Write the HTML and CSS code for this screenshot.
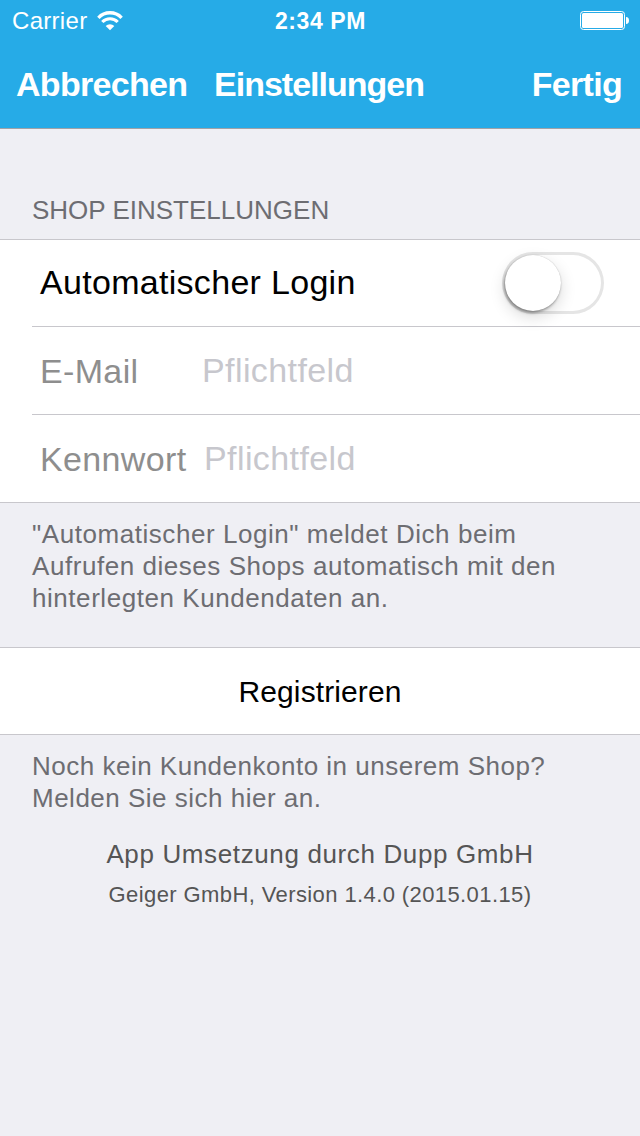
FILE: index.html
```html
<!DOCTYPE html>
<html lang="de">
<head>
    <meta charset="UTF-8">
    <meta name="viewport" content="width=device-width, initial-scale=1.0">
    <title>Einstellungen</title>
    <link rel="stylesheet" href="styles.css">
</head>
<body>
    <header class="header">
        <div class="status-bar">
            <div class="carrier">
                <span>Carrier</span>
                <svg class="wifi" width="26" height="20" viewBox="0 0 26 20">
                    <path d="M1.4 6.8 A16 16 0 0 1 24.6 6.8" fill="none" stroke="#fff" stroke-width="3.4"/>
                    <path d="M5.3 11 A10.7 10.7 0 0 1 20.7 11" fill="none" stroke="#fff" stroke-width="3.2"/>
                    <path d="M13 19.2 L8.7 14.9 A6.1 6.1 0 0 1 17.3 14.9 Z" fill="#fff"/>
                </svg>
            </div>
            <span class="time">2:34 PM</span>
            <svg class="battery" width="49" height="20" viewBox="0 0 49 20">
                <rect x="0.5" y="0.5" width="44" height="18" rx="3" fill="none" stroke="#fff"/>
                <rect x="2" y="2" width="41" height="15" rx="1.5" fill="#fff"/>
                <path d="M46 6 C48.2 6 49 7.4 49 9.5 C49 11.6 48.2 13 46 13 Z" fill="#fff"/>
            </svg>
        </div>
        <nav class="nav-bar">
            <button class="cancel">Abbrechen</button>
            <h1>Einstellungen</h1>
            <button class="done">Fertig</button>
        </nav>
    </header>

    <main>
        <h2>SHOP EINSTELLUNGEN</h2>
        <form class="group">
            <div class="row">
                <label class="login-label" for="autoLogin">Automatischer Login</label>
                <input class="switch" type="checkbox" id="autoLogin">
            </div>
            <div class="row">
                <label for="email">E-Mail</label>
                <input class="field" type="email" id="email" placeholder="Pflichtfeld">
            </div>
            <div class="row">
                <label for="password">Kennwort</label>
                <input class="field password" type="password" id="password" placeholder="Pflichtfeld">
            </div>
        </form>
        <p class="note login-note">"Automatischer Login" meldet Dich beim<br>Aufrufen dieses Shops automatisch mit den<br>hinterlegten Kundendaten an.</p>

        <button class="register">Registrieren</button>
        <p class="note">Noch kein Kundenkonto in unserem Shop?<br>Melden Sie sich hier an.</p>
    </main>

    <footer>
        <p class="credit">App Umsetzung durch Dupp GmbH</p>
        <p class="version">Geiger GmbH, Version 1.4.0 (2015.01.15)</p>
    </footer>
</body>
</html>
```
FILE: styles.css
```css
* {
    box-sizing: border-box;
    margin: 0;
    padding: 0;
    font-family: "Liberation Sans", Arial, sans-serif;
}

body {
    min-height: 100vh;
    background-color: #efeff4;
}

button {
    border: none;
    background: none;
    cursor: pointer;
}

.header {
    height: 129px;
    background-color: #26abe7;
    border-bottom: 1px solid #a0a2a7;
    color: #fff;
}

.status-bar {
    display: grid;
    grid-template-columns: 1fr auto 1fr;
    align-items: center;
    height: 41px;
    padding: 0 11px 0 12px;
    font-size: 24px;
}

.carrier {
    display: flex;
    align-items: center;
    gap: 10px;
    letter-spacing: 0.3px;
}

.time {
    padding-top: 1px;
    font-size: 23px;
    font-weight: bold;
    letter-spacing: 0.6px;
}

.battery {
    justify-self: end;
}

.nav-bar {
    display: grid;
    grid-template-columns: 1fr auto 1fr;
    align-items: center;
    height: 87px;
    padding: 0 18px 0 16px;
}

.nav-bar button, .nav-bar h1 {
    color: #fff;
    font-size: 34px;
    font-weight: bold;
    letter-spacing: -0.7px;
}

.nav-bar h1 {
    letter-spacing: -1px;
}

.cancel {
    justify-self: start;
}

.done {
    justify-self: end;
}

h2 {
    height: 110px;
    padding: 66px 32px 0;
    color: #6d6d72;
    font-size: 26px;
    font-weight: normal;
    line-height: 30px;
}

.group {
    border-top: 1px solid #c8c7cc;
    border-bottom: 1px solid #c8c7cc;
    background-color: #fff;
}

.row {
    display: flex;
    align-items: center;
    height: 88px;
    margin-left: 32px;
    padding: 1px 36px 0 8px;
    border-bottom: 1px solid #c8c7cc;
    font-size: 34px;
}

.row:first-child {
    height: 87px;
    padding-top: 0;
    justify-content: space-between;
}

.row:last-child {
    height: 87px;
    border-bottom: none;
}

.row label {
    min-width: 162px;
    color: #8e8e8e;
    letter-spacing: 0.35px;
}

.row .login-label {
    padding-bottom: 2px;
    color: #000;
    letter-spacing: 0.3px;
}

.field {
    flex: 1;
    min-width: 0;
    padding-bottom: 2px;
    border: none;
    outline: none;
    background: none;
    font-size: 34px;
    letter-spacing: 0.4px;
}

.password {
    padding-left: 2px;
}

.field::placeholder {
    color: #c7c7cd;
    opacity: 1;
}

.switch {
    appearance: none;
    width: 102px;
    height: 62px;
    padding: 3px;
    border-radius: 31px;
    box-shadow: inset 0 0 0 3px #e5e5e5;
    cursor: pointer;
}

.switch::before {
    content: "";
    display: block;
    width: 56px;
    height: 56px;
    border-radius: 50%;
    background-color: #fff;
    box-shadow: 0 0 1px rgba(0, 0, 0, 0.25), -1px 2px 3px rgba(0, 0, 0, 0.35), 0 6px 16px rgba(0, 0, 0, 0.15);
}

.switch:checked {
    background-color: #4cd964;
    box-shadow: none;
}

.switch:checked::before {
    margin-left: 40px;
}

.note {
    padding: 15px 32px 0;
    color: #6d6d72;
    font-size: 26px;
    line-height: 32px;
    letter-spacing: 0.5px;
}

.login-note {
    height: 144px;
    letter-spacing: 0.55px;
}

.register {
    display: block;
    width: 100%;
    height: 88px;
    padding-top: 2px;
    border-top: 1px solid #c8c7cc;
    border-bottom: 1px solid #c8c7cc;
    background-color: #fff;
    color: #000;
    font-size: 30px;
    letter-spacing: 0.1px;
}

footer {
    padding-top: 24px;
    color: #555;
    text-align: center;
}

.credit {
    font-size: 26px;
    line-height: 32px;
    letter-spacing: 0.63px;
}

.version {
    margin-top: 9px;
    font-size: 22px;
    line-height: 32px;
    letter-spacing: 0.4px;
}
```
